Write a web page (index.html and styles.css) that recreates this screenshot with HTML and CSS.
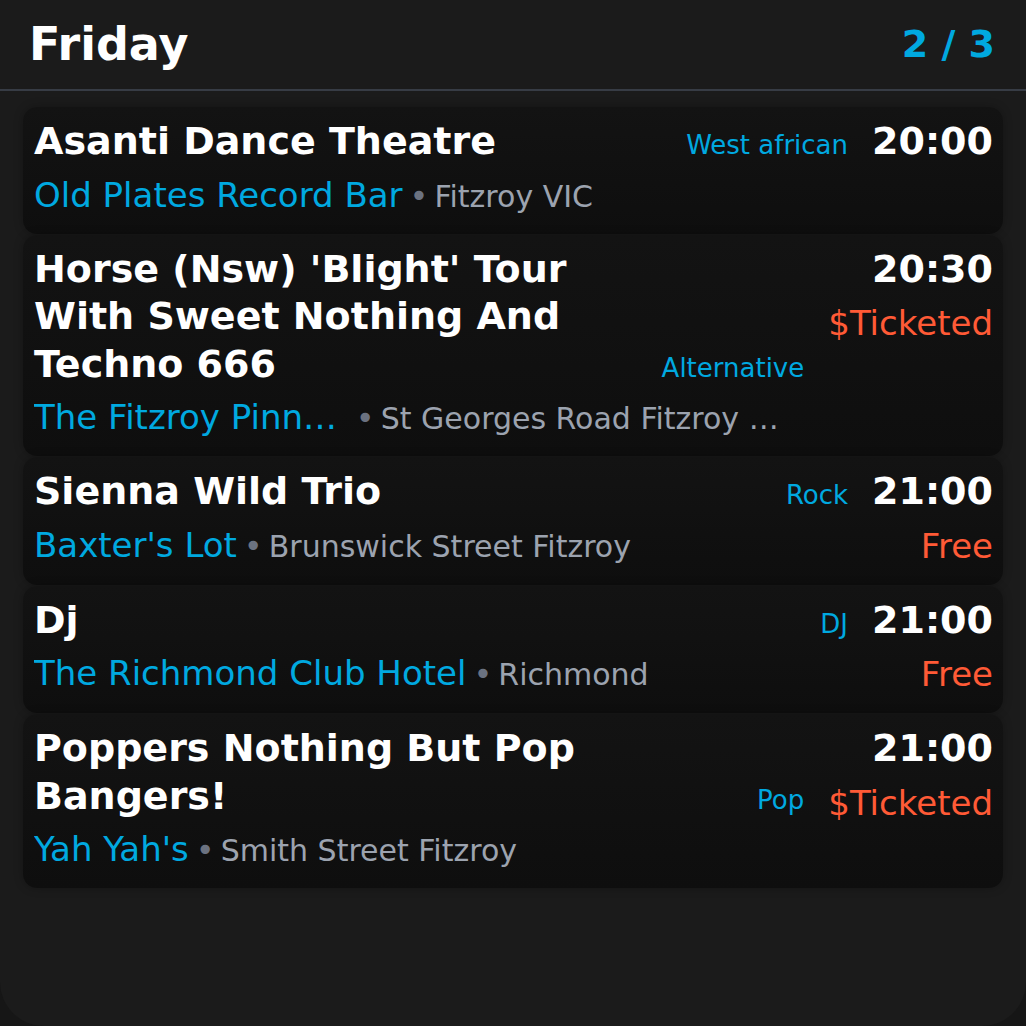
FILE: index.html
```html
<!DOCTYPE html>
<html lang="en">
<head>
<meta charset="utf-8">
<title>Friday</title>
<link rel="stylesheet" href="styles.css">
</head>
<body>
<div class="app">
  <header class="top">
    <h1 class="day">Friday</h1>
    <span class="pager">2 / 3</span>
  </header>
  <main class="list">
    <article class="card">
      <div class="main">
        <div class="head">
          <h2 class="title">Asanti Dance Theatre</h2>
          <span class="genre">West african</span>
        </div>
        <div class="where">
          <span class="venue">Old Plates Record Bar</span>
          <span class="addr"><span class="dot">•</span>Fitzroy VIC</span>
        </div>
      </div>
      <div class="side">
        <span class="time">20:00</span>
      </div>
    </article>
    <article class="card">
      <div class="main">
        <div class="head">
          <h2 class="title">Horse (Nsw) 'Blight' Tour With Sweet Nothing And Techno 666</h2>
          <span class="genre">Alternative</span>
        </div>
        <div class="where">
          <span class="venue">The Fitzroy Pinnacle</span>
          <span class="addr"><span class="dot">•</span>St Georges Road Fitzroy North</span>
        </div>
      </div>
      <div class="side">
        <span class="time">20:30</span>
        <span class="price">$Ticketed</span>
      </div>
    </article>
    <article class="card">
      <div class="main">
        <div class="head">
          <h2 class="title">Sienna Wild Trio</h2>
          <span class="genre">Rock</span>
        </div>
        <div class="where">
          <span class="venue">Baxter's Lot</span>
          <span class="addr"><span class="dot">•</span>Brunswick Street Fitzroy</span>
        </div>
      </div>
      <div class="side">
        <span class="time">21:00</span>
        <span class="price">Free</span>
      </div>
    </article>
    <article class="card">
      <div class="main">
        <div class="head">
          <h2 class="title">Dj</h2>
          <span class="genre">DJ</span>
        </div>
        <div class="where">
          <span class="venue">The Richmond Club Hotel</span>
          <span class="addr"><span class="dot">•</span>Richmond</span>
        </div>
      </div>
      <div class="side">
        <span class="time">21:00</span>
        <span class="price">Free</span>
      </div>
    </article>
    <article class="card">
      <div class="main">
        <div class="head">
          <h2 class="title">Poppers Nothing But Pop Bangers!</h2>
          <span class="genre">Pop</span>
        </div>
        <div class="where">
          <span class="venue">Yah Yah's</span>
          <span class="addr"><span class="dot">•</span>Smith Street Fitzroy</span>
        </div>
      </div>
      <div class="side">
        <span class="time">21:00</span>
        <span class="price">$Ticketed</span>
      </div>
    </article>
  </main>
</div>
</body>
</html>
```

FILE: styles.css
```css
* { box-sizing: border-box; }

html, body {
  margin: 0;
  padding: 0;
  background: #161616;
}

body {
  font-family: "DejaVu Sans", "Liberation Sans", sans-serif;
  color: #ffffff;
}

.app {
  width: 1026px;
  height: 1026px;
  background: #1b1b1b;
  border-radius: 0 0 44px 44px;
  overflow: hidden;
}

.top {
  height: 91px;
  display: flex;
  align-items: center;
  justify-content: space-between;
  padding: 0 31px 2px 29px;
  border-bottom: 2px solid #373c45;
}

.day {
  margin: 0;
  font-size: 46px;
  font-weight: bold;
  line-height: 1;
  color: #ffffff;
}

.pager {
  font-size: 38px;
  font-weight: bold;
  line-height: 1;
  color: #00a9e0;
}

.list {
  display: flex;
  flex-direction: column;
  gap: 1px;
  padding: 16px 23px 0;
}

.card {
  display: flex;
  gap: 24px;
  padding: 11px 10px 19px 11px;
  border-radius: 14px;
  background: linear-gradient(#131313, #0e0e0e);
  box-shadow: 0 0 10px rgba(0, 0, 0, 0.25);
}

.main {
  flex: 1;
  min-width: 0;
  display: flex;
  flex-direction: column;
}

.head {
  display: flex;
  align-items: last baseline;
  gap: 16px;
}

.title {
  flex: 1;
  margin: 0;
  font-size: 38px;
  font-weight: bold;
  line-height: 47.5px;
  color: #ffffff;
}

.genre {
  flex: none;
  font-size: 26px;
  line-height: 32px;
  color: #00a9e0;
}

.where {
  display: flex;
  align-items: baseline;
  margin-top: 9px;
  padding-right: 6px;
  white-space: nowrap;
}

.venue {
  flex: 0 1 auto;
  min-width: 0;
  overflow: hidden;
  text-overflow: ellipsis;
  font-size: 34px;
  line-height: 40px;
  color: #00a9e0;
}

.addr {
  flex: 0 1 auto;
  min-width: 0;
  overflow: hidden;
  text-overflow: ellipsis;
  font-size: 30px;
  line-height: 36px;
  color: #9ca3af;
}

.dot {
  margin: 0 6px 0 7px;
  font-size: 32px;
  line-height: 1;
  color: #6b7280;
}

.side {
  flex: none;
  display: flex;
  flex-direction: column;
  align-items: flex-end;
}

.time {
  font-size: 38px;
  font-weight: bold;
  line-height: 47.5px;
  color: #ffffff;
}

.price {
  margin-top: 10px;
  font-size: 34px;
  line-height: 40px;
  color: #ff5a36;
}
```
